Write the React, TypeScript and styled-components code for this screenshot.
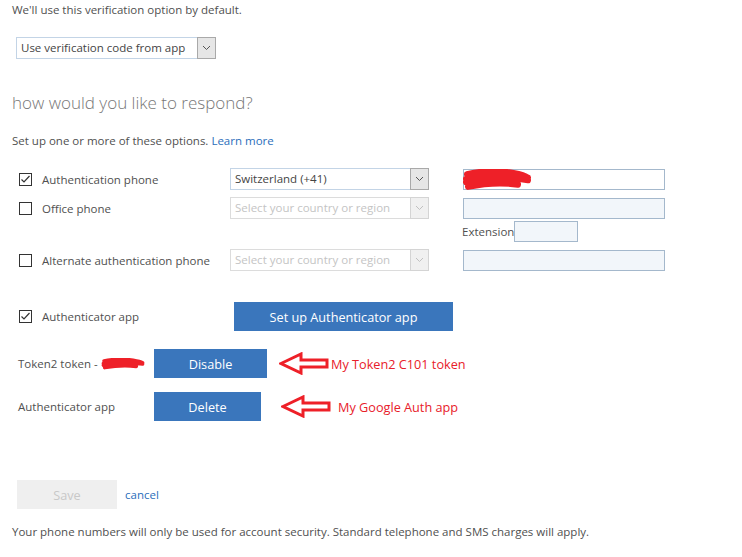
import styled, { createGlobalStyle } from 'styled-components';

const GlobalStyle = createGlobalStyle`
	body {
		margin: 0;
		background: #fff;
		font-family: 'Segoe UI', 'Open Sans', sans-serif;
		font-size: 11.5px;
		color: #505050;
	}
`;

const Page = styled.div`
	width: 742px;
	height: 557px;
	padding: 0 12px;
	box-sizing: border-box;
	overflow: hidden;
`;

const Text = styled.p`
	margin: 0;
	line-height: 16px;
	white-space: nowrap;
`;

const TopText = styled(Text)`
	padding-top: 2px;
`;

const Link = styled.a`
	color: #2a6ebb;
	text-decoration: none;
	cursor: pointer;
`;

const Heading = styled.h2`
	margin: 32px 0 0;
	font-size: 17px;
	font-weight: 300;
	line-height: 24px;
	color: #777;
`;

const Intro = styled(Text)`
	margin-top: 18px;
`;

const SelectBox = styled.div<{ $w: number; $disabled?: boolean }>`
	display: flex;
	width: ${({ $w }) => $w}px;
	height: 22px;
	box-sizing: border-box;
	border: 1px solid ${({ $disabled }) => ($disabled ? '#dcdcdc' : '#c3d4e6')};
	background: #fff;
	color: ${({ $disabled }) => ($disabled ? '#c4c4c4' : '#444')};
`;

const SelectValue = styled.span`
	flex: 1;
	padding-left: 4px;
	line-height: 20px;
	white-space: nowrap;
	overflow: hidden;
`;

const SelectArrow = styled.span<{ $disabled?: boolean }>`
	display: flex;
	align-items: center;
	justify-content: center;
	width: 17px;
	margin: -1px -1px -1px 0;
	border: 1px solid ${({ $disabled }) => ($disabled ? '#d4d4d4' : '#a9a9a9')};
	background: ${({ $disabled }) => ($disabled ? '#f0f0f0' : '#e6e6e6')};
	color: ${({ $disabled }) => ($disabled ? '#c0c0c0' : '#555')};
`;

const DefaultSelect = styled.div`
	margin: 19px 0 0 4px;
`;

const PhoneList = styled.div`
	display: flex;
	flex-direction: column;
	margin-top: 19px;
`;

const Row = styled.div<{ $mt?: number }>`
	display: flex;
	align-items: center;
	margin-top: ${({ $mt }) => $mt ?? 0}px;
`;

const CheckLabel = styled.label<{ $w: number }>`
	display: flex;
	align-items: center;
	gap: 10px;
	width: ${({ $w }) => $w}px;
	padding-left: 7px;
	box-sizing: border-box;
	white-space: nowrap;
`;

const Box = styled.span`
	display: flex;
	align-items: center;
	justify-content: center;
	width: 13px;
	height: 13px;
	box-sizing: border-box;
	border: 1px solid #333;
	background: #fff;
`;

const TextInput = styled.div<{ $w: number; $disabled?: boolean }>`
	position: relative;
	width: ${({ $w }) => $w}px;
	height: 21px;
	box-sizing: border-box;
	border: 1px solid #a4b8cc;
	background: ${({ $disabled }) => ($disabled ? '#f2f6fa' : '#fff')};
`;

const Redaction = styled.span`
	position: absolute;
	left: -2px;
	top: -1px;
	display: flex;
`;

const Spacer = styled.span<{ $w: number }>`
	width: ${({ $w }) => $w}px;
	flex-shrink: 0;
`;

const ExtensionRow = styled.div`
	display: flex;
	align-items: center;
	margin: 2px 0 0 450px;
`;

const Button = styled.button<{ $w: number }>`
	width: ${({ $w }) => $w}px;
	height: 29px;
	border: none;
	background: #3a76bc;
	color: #fff;
	font-family: inherit;
	font-size: 12.7px;
	padding: 0;
	cursor: pointer;
`;

const TokenRow = styled.div<{ $mt: number }>`
	display: flex;
	align-items: center;
	margin-top: ${({ $mt }) => $mt}px;
	padding-left: 6px;
`;

const TokenLabel = styled.span`
	display: flex;
	align-items: center;
	width: 136px;
	white-space: nowrap;
`;

const Note = styled.div<{ $gap: number; $ml: number }>`
	display: flex;
	align-items: center;
	gap: ${({ $gap }) => $gap}px;
	margin-left: ${({ $ml }) => $ml}px;
	color: #e8202a;
	font-size: 12.7px;
	white-space: nowrap;
`;

const Actions = styled.div`
	display: flex;
	align-items: center;
	gap: 8px;
	margin: 59px 0 0 5px;
`;

const SaveButton = styled.button`
	width: 100px;
	height: 29px;
	border: none;
	background: #efefef;
	color: #c8c8c8;
	font-family: inherit;
	font-size: 12.7px;
`;

const Footer = styled(Text)`
	margin-top: 15px;
`;

function Chevron() {
	return (
		<svg width="9" height="6" viewBox="0 0 9 6">
			<path d="M1 1l3.5 3.5L8 1" fill="none" stroke="currentColor" strokeWidth="1" />
		</svg>
	);
}

function Check({ checked }: { checked?: boolean }) {
	return (
		<Box>
			{checked && (
				<svg width="11" height="11" viewBox="0 0 11 11">
					<path d="M1.5 5.5l2.5 2.5L9.5 2" fill="none" stroke="#333" strokeWidth="1.2" />
				</svg>
			)}
		</Box>
	);
}

function Select({ value, w, disabled }: { value: string; w: number; disabled?: boolean }) {
	return (
		<SelectBox $w={w} $disabled={disabled}>
			<SelectValue>{value}</SelectValue>
			<SelectArrow $disabled={disabled}>
				<Chevron />
			</SelectArrow>
		</SelectBox>
	);
}

function Scribble({ w, h }: { w: number; h: number }) {
	return (
		<svg width={w} height={h} viewBox="0 0 70 20" preserveAspectRatio="none">
			<path
				d="M5 5c12-3 26-3 40-2 8 1 14 2 19 4M4 9c16-4 38-5 62-1M4 12c18-5 42-5 62-2M6 16c16-3 34-4 50-2"
				fill="none"
				stroke="#ee2028"
				strokeWidth="6"
				strokeLinecap="round"
			/>
		</svg>
	);
}

function Arrow() {
	return (
		<svg width="50" height="23" viewBox="0 0 50 23">
			<path
				d="M2 11.5L22 2v6h26v7H22v6z"
				fill="none"
				stroke="#ee2028"
				strokeWidth="3"
				strokeLinejoin="miter"
			/>
		</svg>
	);
}

export default function App() {
	return (
		<Page>
			<GlobalStyle />
			<TopText>We'll use this verification option by default.</TopText>
			<DefaultSelect>
				<Select value="Use verification code from app" w={200} />
			</DefaultSelect>

			<Heading>how would you like to respond?</Heading>
			<Intro>
				Set up one or more of these options. <Link>Learn more</Link>
			</Intro>

			<PhoneList>
				<Row>
					<CheckLabel $w={218}>
						<Check checked />
						Authentication phone
					</CheckLabel>
					<Select value="Switzerland (+41)" w={199} />
					<Spacer $w={34} />
					<TextInput $w={202}>
						<Redaction>
							<Scribble w={70} h={22} />
						</Redaction>
					</TextInput>
				</Row>
				<Row $mt={7}>
					<CheckLabel $w={218}>
						<Check />
						Office phone
					</CheckLabel>
					<Select value="Select your country or region" w={199} disabled />
					<Spacer $w={34} />
					<TextInput $w={202} $disabled />
				</Row>
				<ExtensionRow>
					Extension
					<TextInput $w={64} $disabled />
				</ExtensionRow>
				<Row $mt={7}>
					<CheckLabel $w={218}>
						<Check />
						Alternate authentication phone
					</CheckLabel>
					<Select value="Select your country or region" w={199} disabled />
					<Spacer $w={34} />
					<TextInput $w={202} $disabled />
				</Row>
				<Row $mt={31}>
					<CheckLabel $w={222}>
						<Check checked />
						Authenticator app
					</CheckLabel>
					<Button $w={219}>Set up Authenticator app</Button>
				</Row>
			</PhoneList>

			<TokenRow $mt={18}>
				<TokenLabel>
					Token2 token -&nbsp;
					<Scribble w={44} h={12} />
				</TokenLabel>
				<Button $w={113}>Disable</Button>
				<Note $gap={2} $ml={12}>
					<Arrow />
					My Token2 C101 token
				</Note>
			</TokenRow>
			<TokenRow $mt={14}>
				<TokenLabel>Authenticator app</TokenLabel>
				<Button $w={107}>Delete</Button>
				<Note $gap={7} $ml={20}>
					<Arrow />
					My Google Auth app
				</Note>
			</TokenRow>

			<Actions>
				<SaveButton>Save</SaveButton>
				<Link>cancel</Link>
			</Actions>
			<Footer>
				Your phone numbers will only be used for account security. Standard telephone and SMS charges will apply.
			</Footer>
		</Page>
	);
}
